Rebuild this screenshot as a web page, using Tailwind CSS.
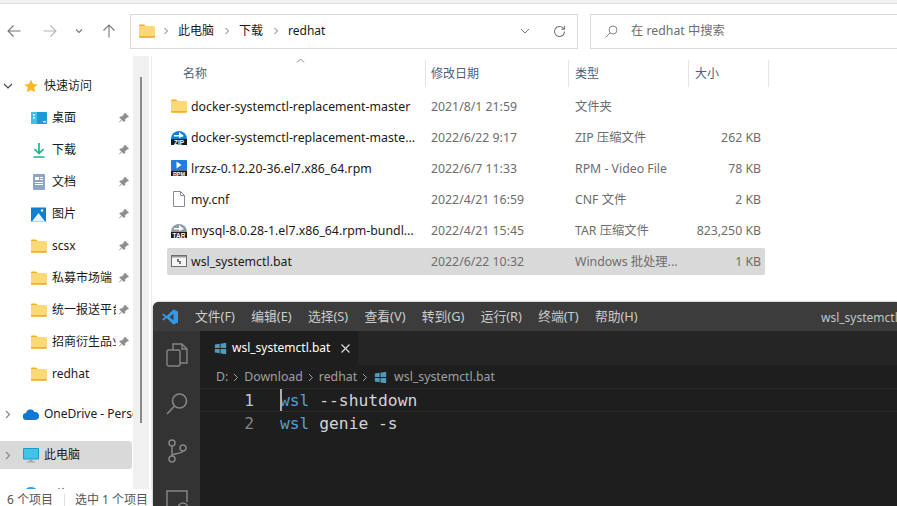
<!DOCTYPE html>
<html lang="zh-CN">
<head>
<meta charset="utf-8"/>
<title>redhat</title>
<script src="https://cdn.jsdelivr.net/npm/@tailwindcss/browser@4"></script>
</head>
<body class="bg-white">
<svg class="hidden" width="0" height="0">
  <symbol id="folder" viewBox="0 0 16 16">
    <path d="M0 2.500C0 2 .4 1.600 1 1.600h4.200l1.600 1.600H0z" fill="#f2b01e"/>
    <path d="M0 4.200C0 3.400.5 3 1.200 3h13.400c.8 0 1.400.5 1.400 1.300v9.200c0 .8-.6 1.300-1.400 1.300H1.200C.5 14.800 0 14.300 0 13.500z" fill="#fcd975"/>
    <path d="M0 13.500c0 .8.500 1.300 1.200 1.300h13.400c.8 0 1.400-.5 1.400-1.300v-.4H0z" fill="#eeb03a"/>
  </symbol>
  <symbol id="pin" viewBox="0 0 12 12">
    <path d="M7.200 1l3.800 3.800-1 .7-1 0-1.900 1.900 0 1.700-1 1L3.900 8.100 1.500 10.500 1 10l2.400-2.400L1.200 5.400l1-1 1.700 0L5.800 2.500l0-1z" fill="#8e8e8e"/>
  </symbol>
  <symbol id="win" viewBox="0 0 16 16">
    <path d="M1 3.200l6-1v5.300H1zM8 2l7-1.200v6.700H8zM1 8.500h6v5.300l-6-1zM8 8.500h7v6.700L8 14z" fill="#519aba"/>
  </symbol>
</svg>

<div class="relative w-[897px] h-[506px] overflow-hidden bg-white flex flex-col font-['Noto_Sans','Noto_Sans_CJK_SC',sans-serif] text-[12px] text-[#1a1a1a]">
  <div class="h-[4px] shrink-0 bg-[#f3f3f3] border-b border-[#dedede]"></div>

  <!-- toolbar -->
  <div class="h-[52px] shrink-0 flex items-center pt-[2px]">
    <div class="w-[130px] shrink-0 flex items-center text-[#8a8a8a]">
      <svg class="ml-[7px]" width="14" height="14" viewBox="0 0 14 14" fill="none" stroke="#777" stroke-width="1.100"><path d="M13.500 7H1M6.500 1.500L1 7l5.500 5.500"/></svg>
      <svg class="ml-[22px]" width="14" height="14" viewBox="0 0 14 14" fill="none" stroke="#b5b5b5" stroke-width="1.100"><path d="M.5 7H13M7.500 1.500L13 7l-5.500 5.500"/></svg>
      <svg class="ml-[18px]" width="8" height="6" viewBox="0 0 8 6" fill="none" stroke="#777" stroke-width="1.100"><path d="M1 1.500l3 3 3-3"/></svg>
      <svg class="ml-[19px]" width="14" height="14" viewBox="0 0 14 14" fill="none" stroke="#777" stroke-width="1.100"><path d="M7 13.500V1M1.500 6.500L7 1l5.500 5.500"/></svg>
    </div>
    <div class="w-[448px] h-[35px] shrink-0 border border-[#d9d9d9] flex items-center pl-[8px]">
      <svg width="16" height="16"><use href="#folder"/></svg>
      <svg class="ml-[8px]" width="6" height="8" viewBox="0 0 6 8" fill="none" stroke="#777"><path d="M1.500 1l3 3-3 3"/></svg>
      <span class="ml-[9px]">此电脑</span>
      <svg class="ml-[10px]" width="6" height="8" viewBox="0 0 6 8" fill="none" stroke="#777"><path d="M1.500 1l3 3-3 3"/></svg>
      <span class="ml-[9px]">下载</span>
      <svg class="ml-[10px]" width="6" height="8" viewBox="0 0 6 8" fill="none" stroke="#777"><path d="M1.500 1l3 3-3 3"/></svg>
      <span class="ml-[9px]">redhat</span>
      <svg class="ml-auto" width="10" height="6" viewBox="0 0 10 6" fill="none" stroke="#777"><path d="M1 1l4 4 4-4"/></svg>
      <svg class="ml-[23px] mr-[11px]" width="13" height="13" viewBox="0 0 13 13" fill="none" stroke="#777" stroke-width="1.100"><path d="M11.500 6.500a5 5 0 1 1-1.500-3.600L11.500 4.200M11.500 1v3.300H8.300"/></svg>
    </div>
    <div class="ml-[12px] flex-1 h-[35px] border border-[#d9d9d9] border-r-0 flex items-center pl-[14px] text-[#6e6e6e] text-[12.300px]">
      <svg width="13" height="13" viewBox="0 0 13 13" fill="none" stroke="#888"><circle cx="8" cy="5" r="4"/><path d="M5 8l-4.500 4.500"/></svg>
      <span class="ml-[13px]">在 redhat 中搜索</span>
    </div>
  </div>

  <!-- body -->
  <div class="flex-1 min-h-0 flex">
    <!-- nav pane -->
    <div class="w-[133px] shrink-0 overflow-hidden pt-[14px]">
      <div class="h-[32px] flex items-center">
        <svg class="ml-[3px]" width="10" height="7" viewBox="0 0 10 7" fill="none" stroke="#444" stroke-width="1.200"><path d="M1 1l4 4 4-4"/></svg>
        <svg class="ml-[11px]" width="14" height="14" viewBox="0 0 14 14"><path d="M7 .5l2 4.400 4.800.5-3.600 3.200 1 4.700L7 10.900 2.800 13.300l1-4.700L.2 5.400 5 4.900z" fill="#fbb91f"/></svg>
        <span class="ml-[6px]">快速访问</span>
      </div>
      <div class="h-[32px] flex items-center pl-[31px]">
        <svg width="16" height="12" viewBox="0 0 16 12"><rect width="16" height="12" rx="1" fill="#1e9ad6"/><rect y="0" width="6" height="12" fill="#3fc0ee"/><rect x="2" y="2" width="2" height="1.500" fill="#fff"/><rect x="2" y="5" width="2" height="1.500" fill="#fff"/><rect x="12" y="9" width="3" height="1.500" fill="#cdeefb"/></svg>
        <span class="ml-[5px] w-[64px] mr-[2px]">桌面</span>
        <svg width="12" height="12"><use href="#pin"/></svg>
      </div>
      <div class="h-[32px] flex items-center pl-[31px]">
        <svg width="16" height="15" viewBox="0 0 16 15" fill="none"><path d="M8 0v10M3.500 6L8 10.500 12.500 6" stroke="#1eb58c" stroke-width="1.700"/><path d="M2.500 14h11" stroke="#1eb58c" stroke-width="1.500"/></svg>
        <span class="ml-[5px] w-[64px] mr-[2px]">下载</span>
        <svg width="12" height="12"><use href="#pin"/></svg>
      </div>
      <div class="h-[32px] flex items-center pl-[31px]">
        <svg width="16" height="16" viewBox="0 0 16 16"><rect x="2" y="0" width="12" height="16" rx="1" fill="#8ca5c4"/><path d="M4 3h4v3H4zM9 3h3v1H9zM9 5h3v1H9zM4 8h8v1H4zM4 10h8v1H4z" fill="#fff"/></svg>
        <span class="ml-[5px] w-[64px] mr-[2px]">文档</span>
        <svg width="12" height="12"><use href="#pin"/></svg>
      </div>
      <div class="h-[32px] flex items-center pl-[31px]">
        <svg width="16" height="15" viewBox="0 0 16 15"><rect y=".5" width="15" height="14" fill="#0f7fd6"/><path d="M1 14.500L7.500 6l6.500 8.500z" fill="#e8f4fc"/><circle cx="11" cy="3.500" r="1.200" fill="#fff"/></svg>
        <span class="ml-[5px] w-[64px] mr-[2px]">图片</span>
        <svg width="12" height="12"><use href="#pin"/></svg>
      </div>
      <div class="h-[32px] flex items-center pl-[31px]">
        <svg width="16" height="16"><use href="#folder"/></svg>
        <span class="ml-[5px] w-[64px] mr-[2px]">scsx</span>
        <svg width="12" height="12"><use href="#pin"/></svg>
      </div>
      <div class="h-[32px] flex items-center pl-[31px]">
        <svg width="16" height="16"><use href="#folder"/></svg>
        <span class="ml-[5px] w-[64px] mr-[2px] overflow-hidden whitespace-nowrap">私募市场端</span>
        <svg width="12" height="12"><use href="#pin"/></svg>
      </div>
      <div class="h-[32px] flex items-center pl-[31px]">
        <svg width="16" height="16"><use href="#folder"/></svg>
        <span class="ml-[5px] w-[64px] mr-[2px] overflow-hidden whitespace-nowrap">统一报送平台</span>
        <svg width="12" height="12"><use href="#pin"/></svg>
      </div>
      <div class="h-[32px] flex items-center pl-[31px]">
        <svg width="16" height="16"><use href="#folder"/></svg>
        <span class="ml-[5px] w-[64px] mr-[2px] overflow-hidden whitespace-nowrap">招商衍生品业务</span>
        <svg width="12" height="12"><use href="#pin"/></svg>
      </div>
      <div class="h-[32px] flex items-center pl-[31px]">
        <svg width="16" height="16"><use href="#folder"/></svg>
        <span class="ml-[5px]">redhat</span>
      </div>
      <div class="h-[28px] mt-[10px] flex items-center overflow-hidden">
        <svg class="ml-[5px] shrink-0" width="6" height="9" viewBox="0 0 6 9" fill="none" stroke="#8a8a8a" stroke-width="1.200"><path d="M1 1l3.500 3.500L1 8"/></svg>
        <svg class="ml-[12px] shrink-0" width="16" height="11" viewBox="0 0 16 11"><path d="M3.500 11a3.500 3.500 0 0 1-.5-7A4.500 4.500 0 0 1 11.500 3a4 4 0 0 1 1 8z" fill="#0f78d4"/></svg>
        <span class="ml-[5px] whitespace-nowrap">OneDrive - Personal</span>
      </div>
      <div class="h-[28px] mt-[13px] mr-[1px] flex items-center bg-[#d9d9d9] rounded-r-[3px]">
        <svg class="ml-[5px] shrink-0" width="6" height="9" viewBox="0 0 6 9" fill="none" stroke="#8a8a8a" stroke-width="1.200"><path d="M1 1l3.500 3.500L1 8"/></svg>
        <svg class="ml-[12px] shrink-0" width="16" height="15" viewBox="0 0 16 15"><rect y="0" width="16" height="11.500" rx="1" fill="#1a9bc9"/><rect x="1" y="1" width="14" height="9.500" fill="#3ec6e8"/><rect x="6.500" y="11.500" width="3" height="2" fill="#90a4ae"/><rect x="4" y="13.500" width="8" height="1" fill="#90a4ae"/></svg>
        <span class="ml-[5px]">此电脑</span>
      </div>
      <div class="h-[28px] mt-[12px] flex items-center">
        <svg class="ml-[23px] shrink-0" width="16" height="16" viewBox="0 0 16 16"><circle cx="8" cy="8" r="8" fill="#2f9bea"/></svg>
        <span class="ml-[5px]">网络</span>
      </div>
    </div>

    <!-- nav scrollbar -->
    <div class="w-[16px] shrink-0 bg-[#f0f0f0] pt-[21px] pl-[7px]">
      <div class="w-[2px] h-[346px] bg-[#8a8a8a]"></div>
    </div>
    <div class="w-[2px] shrink-0"></div>
    <div class="w-px shrink-0 bg-[#ececec]"></div>

    <!-- file list -->
    <div class="flex-1 min-w-0 pl-[15px]">
      <div class="relative w-[602px] h-[27px] mt-[4px] grid grid-cols-[259px_143px_120px_80px] text-[#4c607a]">
        <div class="pl-[16px] flex items-center border-r border-[#e5e5e5]">名称</div>
        <div class="pl-[5px] flex items-center border-r border-[#e5e5e5]">修改日期</div>
        <div class="pl-[6px] flex items-center border-r border-[#e5e5e5]">类型</div>
        <div class="pl-[6px] flex items-center border-r border-[#e5e5e5]">大小</div>
        <svg class="absolute left-[129px] top-[-2px]" width="9" height="5" viewBox="0 0 9 5" fill="none" stroke="#888"><path d="M1 4.500l3.500-3.500 3.500 3.500"/></svg>
      </div>
      <div class="w-[598px] mt-[6px] flex flex-col gap-[4px] text-[#6d6d6d] text-[12.300px]">
        <div class="h-[27px] grid grid-cols-[264px_144px_1fr_auto] items-center pr-[4px] pt-[2px] [&_svg]:relative [&_svg]:top-[-2px]">
          <div class="flex items-center pl-[4px] text-[#1a1a1a]"><svg width="16" height="16"><use href="#folder"/></svg><span class="ml-[4px] whitespace-nowrap">docker-systemctl-replacement-master</span></div>
          <div>2021/8/1 21:59</div>
          <div>文件夹</div>
          <div></div>
        </div>
        <div class="h-[27px] grid grid-cols-[264px_144px_1fr_auto] items-center pr-[4px] pt-[2px] [&_svg]:relative [&_svg]:top-[-2px]">
          <div class="flex items-center pl-[4px] text-[#1a1a1a]">
            <svg width="16" height="16" viewBox="0 0 16 16"><path d="M0 10a8 8 0 0 1 16 0z" fill="#0f7fd6"/><path d="M3 6h5V3l5 4-5 2V7.500H3z" fill="#fff"/><rect y="10" width="16" height="6" fill="#1b1b1b"/><text x="8" y="15.500" text-anchor="middle" fill="#fff" font-size="6.500" font-weight="700" font-family="Liberation Sans, sans-serif">ZIP</text></svg>
            <span class="ml-[4px] whitespace-nowrap">docker-systemctl-replacement-maste...</span></div>
          <div>2022/6/22 9:17</div>
          <div>ZIP 压缩文件</div>
          <div>262 KB</div>
        </div>
        <div class="h-[27px] grid grid-cols-[264px_144px_1fr_auto] items-center pr-[4px] pt-[2px] [&_svg]:relative [&_svg]:top-[-2px]">
          <div class="flex items-center pl-[4px] text-[#1a1a1a]">
            <svg width="16" height="16" viewBox="0 0 16 16"><rect width="16" height="10.500" rx="1" fill="#1f7ee0"/><path d="M5.500 1.500l5 3.500-5 3.500z" fill="#fff"/><rect y="10.500" width="16" height="5.500" fill="#1b1b1b"/><text x="8" y="15.500" text-anchor="middle" fill="#fff" font-size="5.500" font-weight="700" font-family="Liberation Sans, sans-serif">RPM</text></svg>
            <span class="ml-[4px] whitespace-nowrap">lrzsz-0.12.20-36.el7.x86_64.rpm</span></div>
          <div>2022/6/7 11:33</div>
          <div>RPM - Video File</div>
          <div>78 KB</div>
        </div>
        <div class="h-[27px] grid grid-cols-[264px_144px_1fr_auto] items-center pr-[4px] pt-[2px] [&_svg]:relative [&_svg]:top-[-2px]">
          <div class="flex items-center pl-[4px] text-[#1a1a1a]">
            <svg width="16" height="16" viewBox="0 0 16 16" fill="#fff" stroke="#8a8a8a"><path d="M2.500.5h7l4 4v11h-11zM9.500.5v4h4"/></svg>
            <span class="ml-[4px] whitespace-nowrap">my.cnf</span></div>
          <div>2022/4/21 16:59</div>
          <div>CNF 文件</div>
          <div>2 KB</div>
        </div>
        <div class="h-[27px] grid grid-cols-[264px_144px_1fr_auto] items-center pr-[4px] pt-[2px] [&_svg]:relative [&_svg]:top-[-2px]">
          <div class="flex items-center pl-[4px] text-[#1a1a1a]">
            <svg width="16" height="16" viewBox="0 0 16 16"><path d="M0 10a8 8 0 0 1 16 0z" fill="#8d9ba3"/><path d="M3 6h5V3l5 4-5 2V7.500H3z" fill="#fff"/><rect y="10" width="16" height="6" fill="#1b1b1b"/><text x="8" y="15.500" text-anchor="middle" fill="#fff" font-size="6.500" font-weight="700" font-family="Liberation Sans, sans-serif">TAR</text></svg>
            <span class="ml-[4px] whitespace-nowrap">mysql-8.0.28-1.el7.x86_64.rpm-bundl...</span></div>
          <div>2022/4/21 15:45</div>
          <div>TAR 压缩文件</div>
          <div>823,250 KB</div>
        </div>
        <div class="h-[27px] grid grid-cols-[264px_144px_1fr_auto] items-center pr-[4px] pt-[2px] [&_svg]:relative [&_svg]:top-[-2px] bg-[#d9d9d9] rounded-[2px]">
          <div class="flex items-center pl-[4px] text-[#1a1a1a]">
            <svg width="16" height="16" viewBox="0 0 16 16"><rect x=".5" y="2.500" width="15" height="11" fill="#f4f4f4" stroke="#6f6f6f"/><rect x="1" y="3" width="14" height="1.500" fill="#9a9a9a"/><path d="M6 6h2v2h2v3H8V9H6z" fill="#777"/></svg>
            <span class="ml-[4px] whitespace-nowrap">wsl_systemctl.bat</span></div>
          <div>2022/6/22 10:32</div>
          <div>Windows 批处理...</div>
          <div>1 KB</div>
        </div>
      </div>
    </div>
  </div>

  <!-- status bar -->
  <div class="absolute left-0 bottom-0 w-[153px] h-[17px] overflow-hidden bg-white flex items-center pl-[7px] pt-[5px] text-[#555]">
    <span>6 个项目</span>
    <span class="ml-[11px] w-px h-[13px] bg-[#e0e0e0]"></span>
    <span class="ml-[10px] whitespace-nowrap">选中 1 个项目</span>
  </div>

  <!-- VS Code window -->
  <div class="absolute left-[153px] top-[302px] w-[744px] h-[204px] rounded-tl-[6px] overflow-hidden bg-[#1e1e1e] flex flex-col shadow-[0_0_2px_rgba(0,0,0,0.5)]">
    <div class="h-[29px] shrink-0 bg-[#3c3c3c] flex items-center text-[#cccccc]">
      <svg class="ml-[9px]" width="16" height="16" viewBox="0 0 16 16"><path d="M11.500.5L16 2.500v11l-4.500 2L4.500 9 1.500 11.500 0 10.500 3 8 0 5.500 1.500 4.500l3 2.500z" fill="#2f9bea"/><path d="M11.500 4.800L7.500 8l4 3.200z" fill="#3c3c3c"/></svg>
      <div class="ml-[17px] flex gap-[16.300px] whitespace-nowrap text-[12.800px]">
        <span>文件(F)</span><span>编辑(E)</span><span>选择(S)</span><span>查看(V)</span><span>转到(G)</span><span>运行(R)</span><span>终端(T)</span><span>帮助(H)</span>
      </div>
      <span class="absolute left-[668px] top-[7px] whitespace-nowrap text-[#c4c4c4]">wsl_systemctl.bat - Visual Studio Code</span>
    </div>
    <div class="flex-1 min-h-0 flex">
      <div class="w-[47px] shrink-0 bg-[#333333] flex flex-col items-center pt-[12px]">
        <svg class="shrink-0" width="22" height="24" viewBox="0 0 22 24" fill="none" stroke="#858585" stroke-width="1.400"><rect x="1" y="7" width="13" height="16" rx="1.500"/><path d="M7 7V1h9l5 5v14h-7M16 1v5h5"/></svg>
        <svg class="shrink-0 mt-[25px]" width="24" height="24" viewBox="0 0 24 24" fill="none" stroke="#858585" stroke-width="1.600"><circle cx="14.500" cy="9" r="7"/><path d="M9.500 14L2 22"/></svg>
        <svg class="shrink-0 mt-[23px]" width="20" height="24" viewBox="0 0 20 24" fill="none" stroke="#858585" stroke-width="1.500"><circle cx="5" cy="4" r="3"/><circle cx="5" cy="20" r="3"/><circle cx="16" cy="9" r="3"/><path d="M5 7v10M16 12c0 3-11 2-11 5"/></svg>
        <svg class="shrink-0 mt-[26px]" width="24" height="24" viewBox="0 0 24 24" fill="none" stroke="#858585" stroke-width="1.500"><path d="M12 20H2V2h20v11"/><circle cx="18" cy="19" r="5"/></svg>
      </div>
      <div class="flex-1 min-w-0 flex flex-col">
        <div class="h-[34px] shrink-0 bg-[#252526] flex">
          <div class="w-[158px] bg-[#1e1e1e] flex items-center pl-[14px] text-[#ffffff]">
            <svg width="13" height="13"><use href="#win"/></svg>
            <span class="ml-[5px]">wsl_systemctl.bat</span>
            <svg class="ml-[11px]" width="9" height="9" viewBox="0 0 9 9" fill="none" stroke="#ddd" stroke-width="1.100"><path d="M.5.5l8 8M8.500.5l-8 8"/></svg>
          </div>
        </div>
        <div class="h-[23px] shrink-0 flex items-center pl-[16px] pt-[2px] text-[#a0a0a0] text-[12.300px]">
          <span>D:</span>
          <svg class="mx-[5px]" width="6" height="9" viewBox="0 0 6 9" fill="none" stroke="#a0a0a0"><path d="M1 1l3.500 3.500L1 8"/></svg>
          <span>Download</span>
          <svg class="mx-[5px]" width="6" height="9" viewBox="0 0 6 9" fill="none" stroke="#a0a0a0"><path d="M1 1l3.500 3.500L1 8"/></svg>
          <span>redhat</span>
          <svg class="ml-[5px] mr-[6px]" width="6" height="9" viewBox="0 0 6 9" fill="none" stroke="#a0a0a0"><path d="M1 1l3.500 3.500L1 8"/></svg>
          <svg width="13" height="13"><use href="#win"/></svg>
          <span class="ml-[7px]">wsl_systemctl.bat</span>
        </div>
        <div class="font-['DejaVu_Sans_Mono',monospace] text-[16.300px] leading-[24px] text-[#d4d4d4]">
          <div class="relative flex h-[24px] border-y border-[#282828]">
            <span class="w-[54px] text-right text-[#c6c6c6]">1</span>
            <span class="absolute left-[80px] top-0 w-[2px] h-[22px] bg-[#aeafad]"></span>
            <span class="ml-[26px] whitespace-pre"><span class="text-[#569cd6]">wsl</span> --shutdown</span>
          </div>
          <div class="flex h-[24px]">
            <span class="w-[54px] text-right text-[#858585]">2</span>
            <span class="ml-[26px] whitespace-pre"><span class="text-[#569cd6]">wsl</span> genie -s</span>
          </div>
        </div>
      </div>
    </div>
  </div>
</div>
</body>
</html>
